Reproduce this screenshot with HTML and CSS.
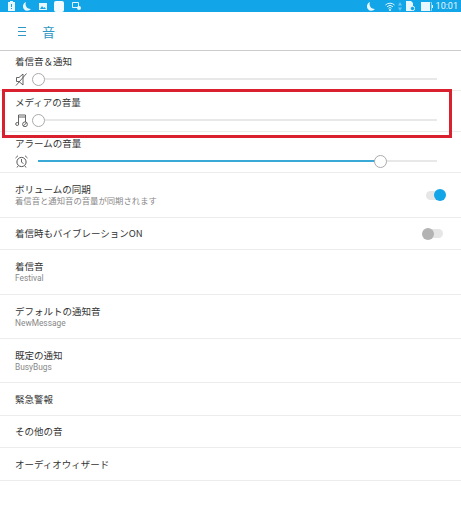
FILE: index.html
```html
<!DOCTYPE html>
<html lang="ja">
<head>
	<meta charset="UTF-8">
	<title>音</title>
	<link rel="stylesheet" href="styles.css">
</head>
<body>
	<div class="statusbar">
		<div class="status-left">
			<svg width="7" height="10" viewBox="0 0 7 10"><path d="M2 0h3v1h2v9H0V1h2z" fill="#e8f6fd"/><path d="M3 3h1v3H3zM3 7h1v1H3z" fill="#12a5e8"/></svg>
			<svg width="8" height="9" viewBox="0 0 8 9"><path d="M3 0a4.500 4.500 0 1 0 5 7A5 5 0 0 1 3 0z" fill="#e8f6fd"/></svg>
			<svg width="8" height="7" viewBox="0 0 8 7"><path d="M0 0h8v7H0z" fill="#e8f6fd"/><path d="M1 6l2-3 1.500 2 1-1 1.500 2z" fill="#12a5e8"/></svg>
			<svg class="status-blob" width="10" height="11" viewBox="0 0 10 11"><rect width="10" height="11" rx="2" fill="#f4fbfe"/></svg>
			<svg width="9" height="8" viewBox="0 0 9 8"><path d="M.5.500h6v5h-6z" fill="none" stroke="#e8f6fd"/><circle cx="7" cy="6" r="2" fill="#e8f6fd"/></svg>
		</div>
		<div class="status-right">
			<svg class="moon" width="8" height="9" viewBox="0 0 8 9"><path d="M3 0a4.500 4.500 0 1 0 5 7A5 5 0 0 1 3 0z" fill="#e8f6fd"/></svg>
			<svg width="10" height="9" viewBox="0 0 10 9"><path d="M.5 3a6.500 6.500 0 0 1 9 0M2 4.700a4.300 4.300 0 0 1 6 0M3.500 6.300a2 2 0 0 1 3 0" fill="none" stroke="#e8f6fd"/><circle cx="5" cy="8" r="1" fill="#e8f6fd"/></svg>
			<svg width="4" height="9" viewBox="0 0 4 9"><path d="M2 0l2 3.500H0zM2 9L0 5.500h4z" fill="#6cc8f0"/></svg>
			<svg width="10" height="10" viewBox="0 0 10 10"><path d="M1 0h5l2 2v8H1z" fill="#e8f6fd"/><circle cx="7.500" cy="7.500" r="2.200" fill="#12a5e8" stroke="#e8f6fd"/></svg>
			<svg class="battery" width="12" height="9" viewBox="0 0 12 9"><path d="M0 0h9v9H0z" fill="#e8f6fd"/><path d="M9.500.500h1v8h-1" fill="none" stroke="#e8f6fd" stroke-width=".6"/><path d="M11 3h1v3h-1z" fill="#e8f6fd"/></svg>
			<span class="clock">10:01</span>
		</div>
	</div>

	<header class="toolbar">
		<span class="menu-icon"><i></i><i></i><i></i></span>
		<h1>音</h1>
	</header>

	<section class="volume">
		<div class="volume-label">着信音＆通知</div>
		<div class="volume-line">
			<svg class="volume-icon" width="13" height="13" viewBox="0 0 13 13"><path d="M1.500 4.500h2.500l4-3.500v11l-4-3.500H1.500zM1 12.500L11.500.500" fill="none" stroke="#555" stroke-width=".9"/></svg>
			<div class="track"><span class="thumb"></span></div>
		</div>
	</section>
	<section class="volume">
		<div class="volume-label">メディアの音量</div>
		<div class="volume-line">
			<svg class="volume-icon" width="13" height="13" viewBox="0 0 13 13"><path d="M3.500 9.500V1h7v7M3.500 3h7" fill="none" stroke="#555" stroke-width=".9"/><circle cx="2.200" cy="10" r="1.500" fill="none" stroke="#555" stroke-width=".9"/><circle cx="10" cy="10.300" r="2.400" fill="none" stroke="#555" stroke-width=".9"/><path d="M8.200 12l3.600-3.400" stroke="#555" stroke-width=".9"/></svg>
			<div class="track"><span class="thumb"></span></div>
		</div>
	</section>
	<section class="volume">
		<div class="volume-label">アラームの音量</div>
		<div class="volume-line">
			<svg class="volume-icon" width="13" height="13" viewBox="0 0 13 13"><circle cx="6.500" cy="7" r="4.600" fill="none" stroke="#555"/><path d="M6.500 4v3.200l2 1.300M.5 3L3 .7M12.500 3L10 .7M3 11l-1 1.500M10 11l1 1.500" fill="none" stroke="#555" stroke-width=".9"/></svg>
			<div class="track"><div class="track-fill"></div><span class="thumb thumb-on"></span></div>
		</div>
	</section>

	<div class="row row-sync">
		<div class="row-text">
			<div class="row-title">ボリュームの同期</div>
			<div class="row-sub">着信音と通知音の音量が同期されます</div>
		</div>
		<span class="toggle toggle-on"></span>
	</div>
	<div class="row row-vibrate">
		<div class="row-text">
			<div class="row-title">着信時もバイブレーションON</div>
		</div>
		<span class="toggle toggle-off"></span>
	</div>
	<div class="row row-sync">
		<div class="row-text">
			<div class="row-title">着信音</div>
			<div class="row-sub">Festival</div>
		</div>
	</div>
	<div class="row row-tall">
		<div class="row-text">
			<div class="row-title">デフォルトの通知音</div>
			<div class="row-sub">NewMessage</div>
		</div>
	</div>
	<div class="row row-tall">
		<div class="row-text">
			<div class="row-title">既定の通知</div>
			<div class="row-sub">BusyBugs</div>
		</div>
	</div>
	<div class="row"><div class="row-title">緊急警報</div></div>
	<div class="row row-vibrate"><div class="row-title">その他の音</div></div>
	<div class="row"><div class="row-title">オーディオウィザード</div></div>

	<div class="highlight"></div>
</body>
</html>
```

FILE: styles.css
```css
html, body {
	height: 100%;
}

body {
	position: relative;
	overflow: hidden;
	margin: 0;
	background: #fff;
	color: #333;
	font: 9.5px "Noto Sans CJK JP", "Noto Sans", sans-serif;
}

.statusbar {
	display: flex;
	justify-content: space-between;
	align-items: center;
	height: 12px;
	padding: 0 3px 0 8px;
	background: #12a5e8;
}
.status-left, .status-right {
	display: flex;
	align-items: center;
}
.status-left {
	gap: 8px;
}
.status-right {
	gap: 3px;
}
.status-right .moon {
	margin-right: 7px;
}
.status-right .battery {
	margin-left: 3px;
}
.status-blob {
	margin-left: -1px;
}
.clock {
	color: #e8f6fd;
	font: 9px Roboto, sans-serif;
}

.toolbar {
	display: flex;
	align-items: center;
	height: 39px;
	padding-left: 18px;
	border-bottom: 1px solid #ccc;
	box-sizing: border-box;
}
.menu-icon {
	display: flex;
	flex-direction: column;
	gap: 3px;
	width: 8px;
}
.menu-icon i {
	height: 1px;
	background: #2f97c4;
}
h1 {
	margin: 0 0 0 16px;
	color: #2f97c4;
	font-size: 13px;
	font-weight: 400;
}

.volume {
	height: 41px;
	padding-left: 15px;
	border-bottom: 1px solid #ececec;
	box-sizing: border-box;
}
.volume:first-of-type {
	height: 40px;
}
.volume-label {
	padding-top: 4px;
	line-height: 15px;
}
.volume:first-of-type .volume-label {
	padding-top: 3px;
}
.volume-line {
	display: flex;
	align-items: center;
	height: 20px;
}
.volume-icon {
	flex: none;
	margin-right: 10px;
}
.track {
	position: relative;
	width: 399px;
	height: 2px;
	background: #e8e8e8;
}
.track-fill {
	width: 342px;
	height: 2px;
	background: #3aa9d6;
}
.thumb {
	position: absolute;
	top: -5.500px;
	left: -6px;
	width: 13px;
	height: 13px;
	border: 1px solid #aaa;
	border-radius: 50%;
	background: #fff;
	box-sizing: border-box;
}
.thumb-on {
	left: 336px;
}

.row {
	display: flex;
	justify-content: space-between;
	align-items: center;
	height: 33px;
	padding: 0 16px 0 15px;
	border-bottom: 1px solid #ececec;
	box-sizing: border-box;
}
.row-sync {
	height: 45px;
}
.row-vibrate {
	height: 32px;
}
.row-tall {
	height: 44px;
}
.row-title {
	line-height: 13px;
}
.row-sub {
	color: #888;
	font: 8.350px/11px Roboto, "Noto Sans CJK JP", sans-serif;
}

.toggle {
	position: relative;
	width: 18px;
	height: 9px;
	border-radius: 5px;
	background: #e6e6e6;
}
.toggle:after {
	content: '';
	position: absolute;
	top: -1.500px;
	width: 12px;
	height: 12px;
	border-radius: 50%;
}
.toggle-on {
	margin-right: 1px;
}
.toggle-on:after {
	right: -2px;
	background: #12a5e8;
}
.toggle-off {
	margin-right: 2px;
}
.toggle-off:after {
	left: -3px;
	background: #b3b3b3;
}

.highlight {
	position: absolute;
	top: 89px;
	left: 2px;
	width: 450px;
	height: 49px;
	border: 3px solid #d9202e;
	box-sizing: border-box;
}
```
